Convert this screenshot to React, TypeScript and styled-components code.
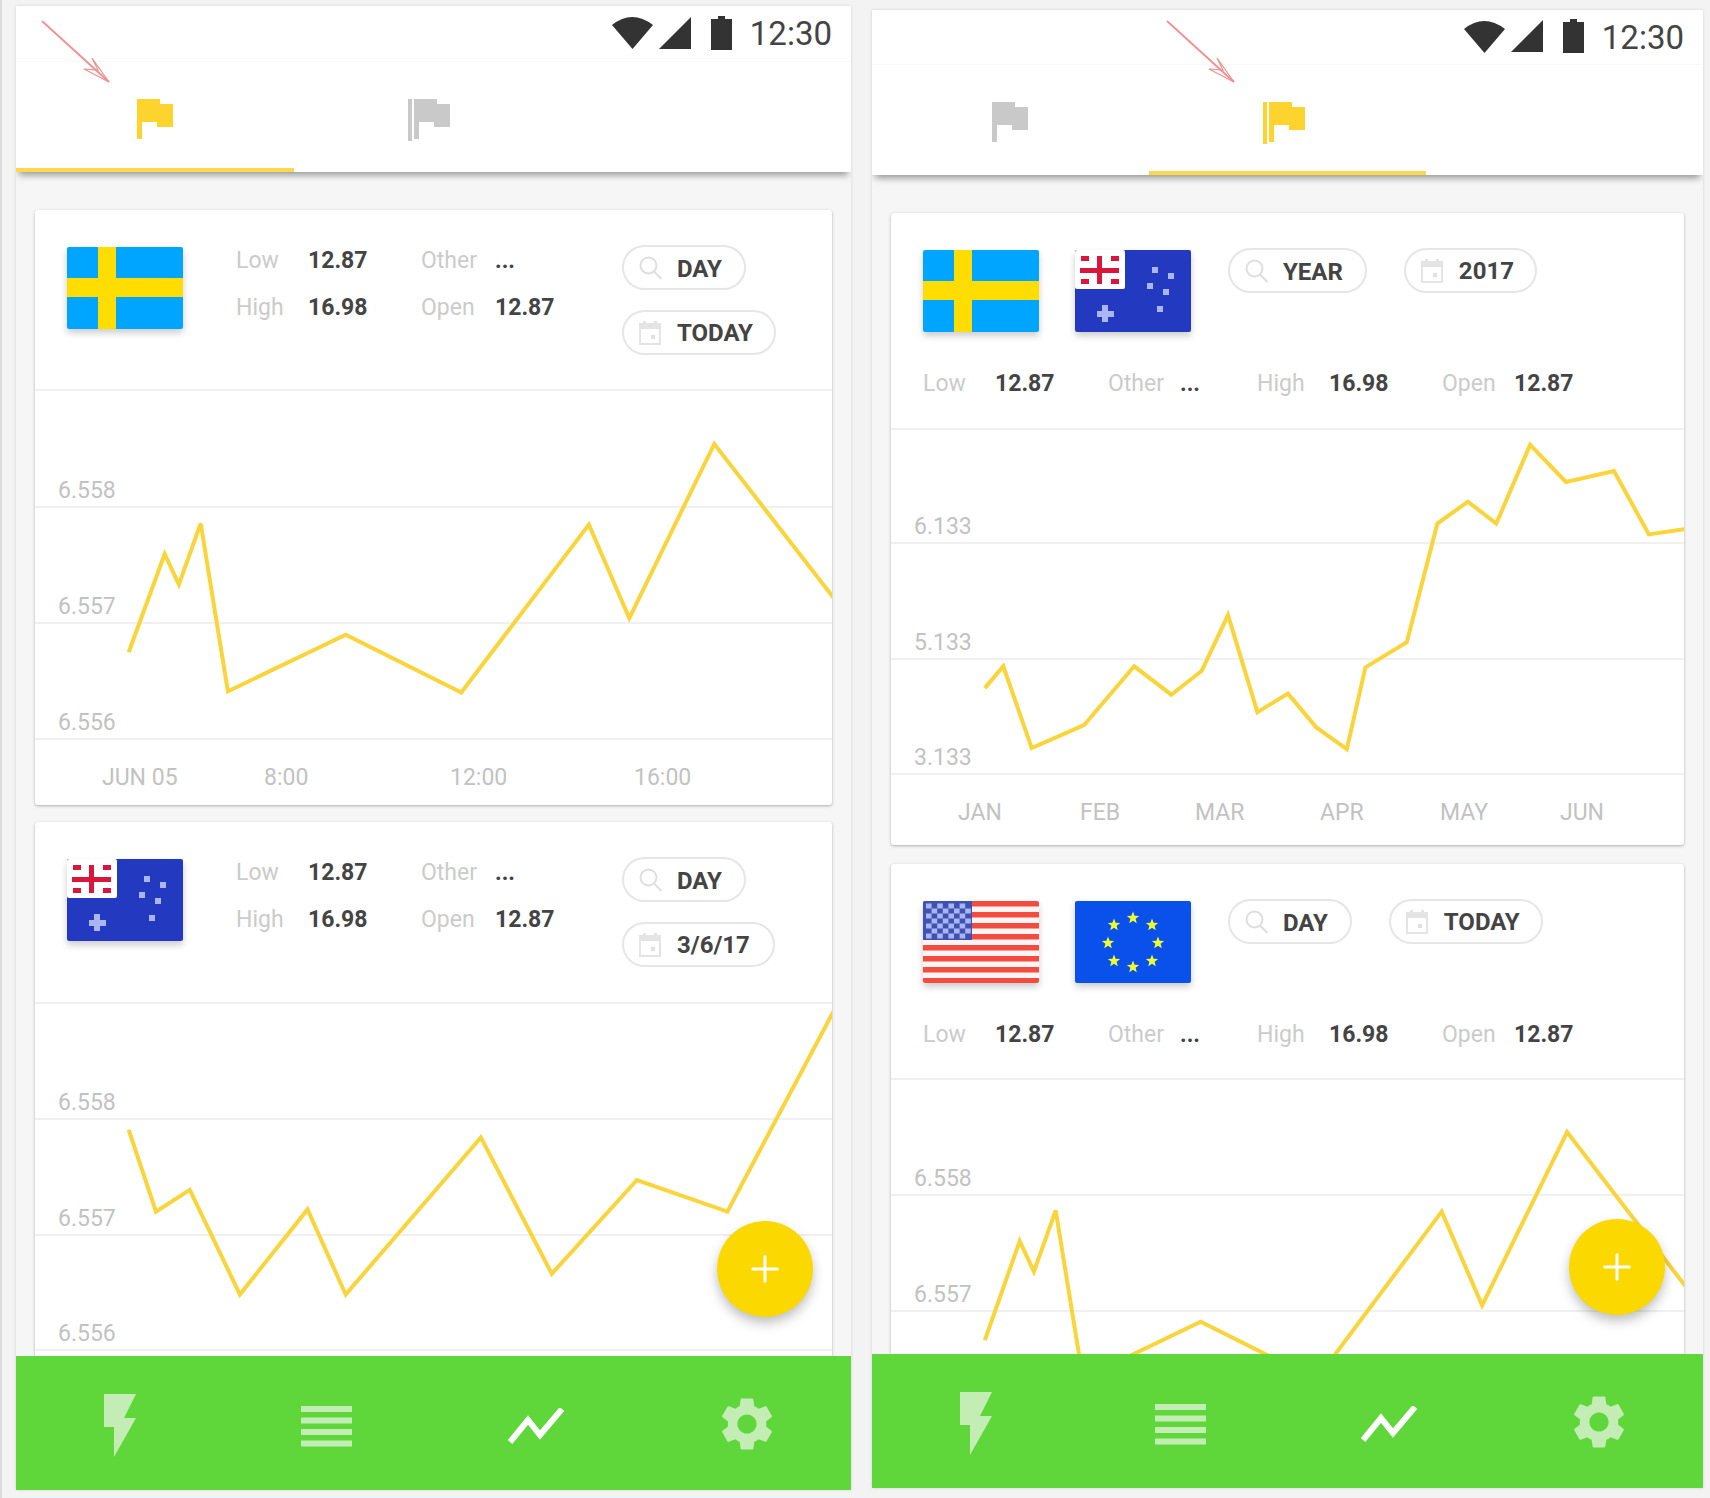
import React from 'react'
import styled, { createGlobalStyle } from 'styled-components'
import { MdSettings } from 'react-icons/md'
import { Plus } from 'lucide-react'

// chart points were read off a 1568px wide copy of the design
const SCALE = 1710 / 1568

const GlobalStyle = createGlobalStyle`
  html, body {
    margin: 0;
    height: 1498px;
    overflow: hidden;
    background: #f3f3f3;
    font-family: Roboto, "Liberation Sans", sans-serif;
  }
`

type ChartData = {
  height: number
  originX: number
  originY: number
  grid: { y: number; label: string }[]
  ticks: { x: number; label: string }[]
  points: number[][]
}

const Chart: React.FC<{ data: ChartData }> = ({ data }) => {
  const line = data.points
    .map(([x, y]) => `${(x * SCALE - data.originX).toFixed(1)},${(y * SCALE - data.originY).toFixed(1)}`)
    .join(' ')
  return (
    <ChartSvg height={data.height}>
      {data.grid.map(g => (
        <React.Fragment key={g.y}>
          <line x1="0" x2="800" y1={g.y} y2={g.y} stroke="#f0f0f0" strokeWidth="2" />
          <ChartText x="23" y={g.y - 9}>{g.label}</ChartText>
        </React.Fragment>
      ))}
      {data.ticks.map(t => (
        <ChartText key={t.label} x={t.x} y={data.grid[data.grid.length - 1].y + 46}>{t.label}</ChartText>
      ))}
      <polyline points={line} fill="none" stroke="#f9d43a" strokeWidth="4" strokeLinejoin="miter" />
    </ChartSvg>
  )
}

const FlagIcon: React.FC<{ color: string; double?: boolean }> = ({ color, double }) => (
  <svg width={double ? 42 : 36} height={double ? 42 : 40} viewBox={double ? '0 0 42 42' : '0 0 36 40'} fill={color}>
    {double && <rect x="0" y="0" width="4" height="42" />}
    <path transform={double ? 'translate(6 0)' : undefined} d="M0 0H23V5H36V28H20V23H5V40H0Z" />
  </svg>
)

const SwedenFlag = () => (
  <FlagSvg viewBox="0 0 116 82">
    <rect width="116" height="82" fill="#00a5ff" />
    <rect x="31" width="18" height="82" fill="#ffdd00" />
    <rect y="31" width="116" height="19" fill="#ffdd00" />
  </FlagSvg>
)

const AussieFlag = () => (
  <FlagSvg viewBox="0 0 116 82">
    <rect width="116" height="82" fill="#2239c0" />
    <rect width="50" height="39" rx="2" fill="#fff" />
    <g fill="#d9173d">
      <rect x="22" y="6" width="5" height="28" />
      <rect x="5" y="18" width="39" height="5" />
      <rect x="6" y="6" width="8" height="5" />
      <rect x="36" y="6" width="8" height="5" />
      <rect x="6" y="29" width="8" height="5" />
      <rect x="36" y="29" width="8" height="5" />
    </g>
    <g fill="#aab6f0">
      <rect x="77" y="17" width="6" height="6" />
      <rect x="93" y="23" width="6" height="6" />
      <rect x="72" y="33" width="6" height="6" />
      <rect x="88" y="39" width="6" height="6" />
      <rect x="82" y="56" width="6" height="6" />
      <rect x="27" y="55" width="6" height="17" />
      <rect x="22" y="61" width="17" height="6" />
    </g>
  </FlagSvg>
)

const UsaFlag = () => {
  const stripes = [3, 14, 25, 36, 47, 58, 69, 80]
  const dots: number[][] = []
  for (let row = 0; row < 7; row++) {
    for (let col = 0; col < 8; col++) {
      if ((row + col) % 2 === 0) dots.push([col * 5.6 + 3, row * 5 + 2.5])
    }
  }
  return (
    <FlagSvg viewBox="0 0 116 82">
      <rect width="116" height="82" fill="#fdf4f3" />
      {stripes.map(y => (
        <rect key={y} y={y - 3} width="116" height="5.5" fill="#f44b40" />
      ))}
      <rect width="49" height="39" fill="#3f51b5" />
      {dots.map(([x, y]) => (
        <rect key={`${x}-${y}`} x={x} y={y} width="5.6" height="5" fill="#a9b6ee" />
      ))}
    </FlagSvg>
  )
}

const starPath = (cx: number, cy: number, r: number) => {
  const pts: string[] = []
  for (let i = 0; i < 10; i++) {
    const radius = i % 2 === 0 ? r : r * 0.42
    const angle = (Math.PI / 5) * i - Math.PI / 2
    pts.push(`${(cx + radius * Math.cos(angle)).toFixed(1)},${(cy + radius * Math.sin(angle)).toFixed(1)}`)
  }
  return pts.join(' ')
}

const EuFlag = () => {
  const stars = [[58, 17], [39, 24], [77, 24], [33, 42], [83, 42], [39, 60], [77, 60], [58, 66]]
  return (
    <FlagSvg viewBox="0 0 116 82">
      <rect width="116" height="82" fill="#0a50ea" />
      {stars.map(([x, y]) => (
        <polygon key={`${x}-${y}`} points={starPath(x, y, 6.5)} fill="#efff2e" />
      ))}
    </FlagSvg>
  )
}

const SearchIcon = () => (
  <svg width="24" height="24" viewBox="0 0 24 24" fill="none" stroke="#dedede" strokeWidth="2">
    <circle cx="9.5" cy="9.5" r="8" />
    <path d="M15 15.5L22.5 23" />
  </svg>
)

const CalendarIcon = () => (
  <svg width="22" height="24" viewBox="0 0 22 24">
    <rect x="4" y="0" width="3" height="4" fill="#e4e4e4" />
    <rect x="15" y="0" width="3" height="4" fill="#e4e4e4" />
    <rect x="1" y="3" width="20" height="20" fill="none" stroke="#e4e4e4" strokeWidth="2" />
    <rect x="1" y="3" width="20" height="5" fill="#e4e4e4" />
    <rect x="12" y="14" width="4" height="4" fill="#e0e0e0" />
  </svg>
)

const Pill: React.FC<{ kind: 'search' | 'calendar'; text: string; min?: number }> = ({ kind, text, min }) => (
  <PillBox $min={min} $calendar={kind === 'calendar'}>
    {kind === 'search' ? <SearchIcon /> : <CalendarIcon />}
    <PillText $low={kind === 'search'}>{text}</PillText>
  </PillBox>
)

const Stats: React.FC<{ wide?: boolean }> = ({ wide }) => {
  const cells = [['Low', '12.87'], ['Other', '...'], ['High', '16.98'], ['Open', '12.87']]
  return (
    <StatGrid $wide={wide}>
      {cells.map(([label, value]) => (
        <React.Fragment key={label}>
          <StatLabel>{label}</StatLabel>
          <StatValue>{value}</StatValue>
        </React.Fragment>
      ))}
    </StatGrid>
  )
}

const Arrow: React.FC<{ left: number; top: number }> = ({ left, top }) => (
  <ArrowSvg $left={left} $top={top} width="70" height="64" viewBox="0 0 70 64" fill="none" stroke="#f28f8f" strokeWidth="1.8">
    <path d="M1 1L68 62" />
    <path d="M68 62L51 38L57 50L43 49Z" strokeWidth="1.2" />
  </ArrowSvg>
)

const BottomNav = () => (
  <Nav>
    <NavItem $top={5}>
      <svg width="32" height="63" viewBox="0 0 32 63" fill="#c3edb5">
        <path d="M0 0H32L20 24H32L10 63V33H0Z" />
      </svg>
    </NavItem>
    <NavItem $top={6} $right={6}>
      <svg width="51" height="41" viewBox="0 0 51 41" fill="#c3edb5">
        <rect y="0" width="51" height="6" />
        <rect y="11.5" width="51" height="6" />
        <rect y="23" width="51" height="6" />
        <rect y="34.5" width="51" height="6" />
      </svg>
    </NavItem>
    <NavItem $top={6} $right={4}>
      <svg width="56" height="36" viewBox="0 0 56 36" fill="none" stroke="#fff" strokeWidth="6">
        <path d="M2 34L20 12L32 27L54 1" />
      </svg>
    </NavItem>
    <NavItem $top={1}>
      <MdSettings size={64} color="#c3edb5" />
    </NavItem>
  </Nav>
)

const StatusIcons = () => (
  <>
    <svg width="41" height="33" viewBox="0 0 41 33" fill="#333">
      <path d="M0 9Q20 -7 41 9L20.5 33Z" />
    </svg>
    <svg width="32" height="32" viewBox="0 0 32 32" fill="#333">
      <path d="M32 0V32H0Z" />
    </svg>
    <BatterySvg width="21" height="34" viewBox="0 0 21 34" fill="#333">
      <path d="M7 0H14V3H21V34H0V3H7Z" />
    </BatterySvg>
    <Time>12:30</Time>
  </>
)

const chartLeftOne: ChartData = {
  height: 414,
  originX: 35,
  originY: 391,
  grid: [{ y: 116, label: '6.558' }, { y: 232, label: '6.557' }, { y: 348, label: '6.556' }],
  ticks: [{ x: 67, label: 'JUN 05' }, { x: 229, label: '8:00' }, { x: 415, label: '12:00' }, { x: 599, label: '16:00' }],
  points: [[118, 598], [151, 508], [164, 536], [184, 480], [209, 634], [317, 582], [423, 635], [540, 481], [577, 567], [655, 407], [765, 549]],
}

const chartLeftTwo: ChartData = {
  height: 415,
  originX: 35,
  originY: 1004,
  grid: [{ y: 115, label: '6.558' }, { y: 231, label: '6.557' }, { y: 346, label: '6.556' }],
  ticks: [],
  points: [[118, 1036], [143, 1111], [174, 1091], [220, 1187], [282, 1109], [317, 1187], [441, 1043], [506, 1168], [584, 1082], [667, 1111], [765, 926]],
}

const chartRightOne: ChartData = {
  height: 415,
  originX: 891,
  originY: 430,
  grid: [{ y: 113, label: '6.133' }, { y: 229, label: '5.133' }, { y: 344, label: '3.133' }],
  ticks: [{ x: 67, label: 'JAN' }, { x: 189, label: 'FEB' }, { x: 304, label: 'MAR' }, { x: 429, label: 'APR' }, { x: 549, label: 'MAY' }, { x: 669, label: 'JUN' }],
  points: [[903, 631], [920, 611], [946, 686], [994, 665], [1040, 611], [1074, 637], [1102, 615], [1126, 564], [1153, 653], [1181, 636], [1207, 667], [1235, 687], [1252, 612], [1290, 589], [1318, 480], [1346, 460], [1372, 480], [1403, 408], [1436, 442], [1480, 432], [1512, 490], [1546, 485]],
}

const chartRightTwo: ChartData = {
  height: 415,
  originX: 891,
  originY: 1080,
  grid: [{ y: 115, label: '6.558' }, { y: 231, label: '6.557' }],
  ticks: [],
  points: [[903, 1229], [935, 1138], [948, 1166], [968, 1110], [993, 1264], [1101, 1212], [1207, 1265], [1322, 1111], [1359, 1197], [1437, 1038], [1546, 1180]],
}

const App: React.FC = () => {
  return (
    <Page>
      <GlobalStyle />
      <Phone $width={835} $height={1484} $top={6} $left={14}>
        <Arrow left={25} top={14} />
        <StatusBar $height={56}><StatusIcons /></StatusBar>
        <TabBar>
          <Tab $active>
            <FlagIcon color="#fdd32e" />
          </Tab>
          <Tab $shift={8}>
            <FlagIcon color="#c9c9c9" double />
          </Tab>
        </TabBar>
        <Content>
          <Card>
            <Header $height={181}>
              <SwedenFlag />
              <Stats />
              <PillStack>
                <Pill kind="search" text="DAY" />
                <Pill kind="calendar" text="TODAY" />
              </PillStack>
            </Header>
            <Chart data={chartLeftOne} />
          </Card>
          <Card>
            <Header $height={182}>
              <AussieFlag />
              <Stats />
              <PillStack>
                <Pill kind="search" text="DAY" />
                <Pill kind="calendar" text="3/6/17" min={153} />
              </PillStack>
            </Header>
            <Chart data={chartLeftTwo} />
          </Card>
        </Content>
        <Fab><Plus size={42} strokeWidth={1.7} color="#fff" /></Fab>
        <BottomNav />
      </Phone>
      <Phone $width={831} $height={1478} $top={10} $left={21}>
        <Arrow left={294} top={10} />
        <StatusBar $height={55}><StatusIcons /></StatusBar>
        <TabBar>
          <Tab $shift={2}>
            <FlagIcon color="#c9c9c9" />
          </Tab>
          <Tab $active $shift={8}>
            <FlagIcon color="#fdd32e" double />
          </Tab>
        </TabBar>
        <Content>
          <Card $gap={19}>
            <WideHeader $height={217}>
              <FlagRow>
                <SwedenFlag />
                <AussieFlag />
                <Pill kind="search" text="YEAR" />
                <Pill kind="calendar" text="2017" min={133} />
              </FlagRow>
              <Stats wide />
            </WideHeader>
            <Chart data={chartRightOne} />
          </Card>
          <Card>
            <WideHeader $height={216}>
              <FlagRow>
                <UsaFlag />
                <EuFlag />
                <Pill kind="search" text="DAY" />
                <Pill kind="calendar" text="TODAY" />
              </FlagRow>
              <Stats wide />
            </WideHeader>
            <Chart data={chartRightTwo} />
          </Card>
        </Content>
        <Fab><Plus size={42} strokeWidth={1.7} color="#fff" /></Fab>
        <BottomNav />
      </Phone>
    </Page>
  )
}

export default App

const Page = styled.div`
  display: flex;
  align-items: flex-start;
  height: 1498px;
  border-left: 2px solid #dcdcdc;
`

const Phone = styled.div<{ $width: number; $height: number; $top: number; $left: number }>`
  position: relative;
  display: flex;
  flex-direction: column;
  flex-shrink: 0;
  width: ${p => p.$width}px;
  height: ${p => p.$height}px;
  margin-top: ${p => p.$top}px;
  margin-left: ${p => p.$left}px;
  background: #f6f6f6;
  box-shadow: 0 0 3px rgba(0, 0, 0, 0.14);
  overflow: hidden;
`

const ArrowSvg = styled.svg<{ $left: number; $top: number }>`
  position: absolute;
  left: ${p => p.$left}px;
  top: ${p => p.$top}px;
  z-index: 3;
`

const StatusBar = styled.div<{ $height: number }>`
  display: flex;
  flex-shrink: 0;
  align-items: center;
  justify-content: flex-end;
  gap: 6px;
  height: ${p => p.$height}px;
  padding: 0 19px 2px 0;
  background: #fff;
  border-bottom: 1px solid #f8f8f8;
  box-sizing: border-box;
`

const BatterySvg = styled.svg`
  margin-left: 14px;
`

const Time = styled.span`
  margin: 2px 0 0 12px;
  color: #444;
  font-size: 33px;
  font-weight: 400;
  line-height: 1;
`

const TabBar = styled.div`
  position: relative;
  z-index: 1;
  display: grid;
  flex-shrink: 0;
  grid-template-columns: repeat(3, 1fr);
  height: 110px;
  background: #fff;
  box-shadow: 0 6px 7px -3px rgba(0, 0, 0, 0.4);
`

const Tab = styled.div<{ $active?: boolean; $shift?: number }>`
  display: flex;
  align-items: flex-start;
  justify-content: center;
  padding: 37px ${p => p.$shift ?? 0}px 0 0;
  box-sizing: border-box;
  border-bottom: 4px solid ${p => (p.$active ? '#fdd74e' : 'transparent')};
`

const Content = styled.div`
  flex: 1;
  min-height: 0;
  padding: 38px 19px 0;
  overflow: hidden;
`

const Card = styled.div<{ $gap?: number }>`
  margin-bottom: ${p => p.$gap ?? 17}px;
  background: #fff;
  border-radius: 3px;
  box-shadow: 0 1px 3px rgba(0, 0, 0, 0.3);
`

const Header = styled.div<{ $height: number }>`
  display: flex;
  align-items: flex-start;
  height: ${p => p.$height}px;
  padding: 37px 0 0 32px;
  border-bottom: 2px solid #f0f0f0;
  box-sizing: border-box;
`

const WideHeader = styled.div<{ $height: number }>`
  display: flex;
  flex-direction: column;
  height: ${p => p.$height}px;
  padding: 37px 0 0 32px;
  border-bottom: 2px solid #f0f0f0;
  box-sizing: border-box;
`

const FlagRow = styled.div`
  display: flex;
  align-items: flex-start;
  gap: 36px;
`

const FlagSvg = styled.svg`
  flex-shrink: 0;
  width: 116px;
  height: 82px;
  border-radius: 2px;
  box-shadow: 0 4px 7px rgba(0, 0, 0, 0.2);
`

const StatGrid = styled.div<{ $wide?: boolean }>`
  display: grid;
  grid-template-columns: ${p => (p.$wide ? '72px 113px 72px 77px 72px 113px 72px 80px' : '72px 113px 74px 127px')};
  row-gap: 21px;
  align-items: center;
  margin: ${p => (p.$wide ? '39px 0 0 0' : '1px 0 0 53px')};
`

const StatLabel = styled.span`
  color: #cbcbcb;
  font-size: 23px;
  line-height: 26px;
`

const StatValue = styled.span`
  color: #444;
  font-size: 23px;
  font-weight: 700;
  line-height: 26px;
`

const PillStack = styled.div`
  display: flex;
  flex-direction: column;
  align-items: flex-start;
  gap: 20px;
  margin-top: -2px;
`

const PillBox = styled.div<{ $min?: number; $calendar?: boolean }>`
  display: inline-flex;
  flex-shrink: 0;
  align-items: center;
  gap: ${p => (p.$calendar ? 16 : 14)}px;
  height: 45px;
  min-width: ${p => p.$min ?? 0}px;
  margin: -2px 0 0 1px;
  padding: 0 ${p => (p.$calendar ? 21 : 22)}px 0 15px;
  border: 2px solid #e6e6e6;
  border-radius: 23px;
  box-sizing: border-box;
  ${PillStack} & {
    margin: 0;
  }
`

const PillText = styled.span<{ $low?: boolean }>`
  padding-top: ${p => (p.$low ? 3 : 0)}px;
  color: #444;
  font-size: 24px;
  font-weight: 700;
`

const ChartSvg = styled.svg`
  display: block;
  width: 100%;
`

const ChartText = styled.text`
  fill: #c2c2c2;
  font-family: Roboto, "Liberation Sans", sans-serif;
  font-size: 23px;
`

const Fab = styled.div`
  position: absolute;
  right: 38px;
  bottom: 173px;
  z-index: 2;
  display: flex;
  align-items: center;
  justify-content: center;
  width: 96px;
  height: 96px;
  background: #fad800;
  border-radius: 50%;
  box-shadow: 0 6px 12px rgba(0, 0, 0, 0.25);
`

const Nav = styled.div`
  position: relative;
  z-index: 1;
  display: grid;
  flex-shrink: 0;
  grid-template-columns: repeat(4, 1fr);
  height: 134px;
  background: #5fd63a;
`

const NavItem = styled.div<{ $top?: number; $right?: number }>`
  display: flex;
  align-items: center;
  justify-content: center;
  padding: ${p => p.$top ?? 0}px ${p => p.$right ?? 0}px 0 0;
`
